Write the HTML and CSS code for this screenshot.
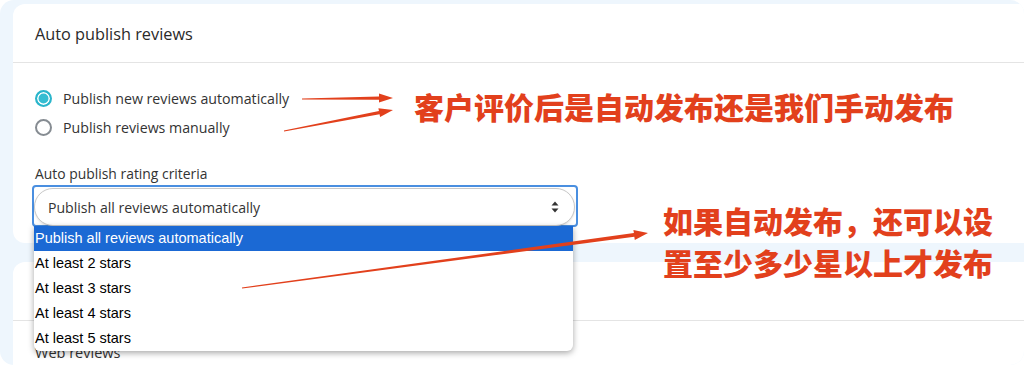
FILE: index.html
```html
<!DOCTYPE html>
<html lang="en">
<head>
<meta charset="utf-8">
<title>Auto publish reviews</title>
<link rel="stylesheet" href="styles.css">
</head>
<body>
<div class="frame">
  <section class="card card-top">
    <header class="card-head">Auto publish reviews</header>
    <div class="card-body">
      <div class="radios">
        <label class="radio-row"><span class="radio checked"></span><span>Publish new reviews automatically</span></label>
        <label class="radio-row"><span class="radio"></span><span>Publish reviews manually</span></label>
      </div>
      <div class="field-label">Auto publish rating criteria</div>
      <div class="select-focus">
        <div class="select">
          <span>Publish all reviews automatically</span>
          <svg class="updown" width="8" height="12" viewBox="0 0 8 12"><path d="M4 0.5 L7.5 4.5 H0.5 Z M4 11.5 L7.5 7.5 H0.5 Z" fill="#333"/></svg>
        </div>
      </div>
    </div>
  </section>
  <section class="card card-bottom">
    <header class="card-head card-head2"></header>
    <div class="card-body2">Web reviews</div>
  </section>

  <ul class="dropdown">
    <li class="opt selected">Publish all reviews automatically</li>
    <li class="opt">At least 2 stars</li>
    <li class="opt">At least 3 stars</li>
    <li class="opt">At least 4 stars</li>
    <li class="opt">At least 5 stars</li>
  </ul>

  <svg class="arrows" width="1024" height="365" viewBox="0 0 1024 365">
    <g fill="#e2401c">
      <polygon points="302,99.6 379,99.8 379,102.6 393,98 379,93.6 379,96.5 302,98.4"/>
      <polygon points="284.1,131.6 379.55,114.2 380.1,117.1 393,110 378.4,108.2 378.95,111.1 283.9,130.4"/>
      <polygon points="242.1,288.6 634.3,236.7 634.8,239.9 648,233 633.4,229.9 633.9,233.1 241.9,287.4"/>
    </g>
  </svg>

  <div class="note note1">客户评价后是自动发布还是我们手动发布</div>
  <div class="note note2">如果自动发布，还可以设<br>置至少多少星以上才发布</div>
</div>
</body>
</html>
```
FILE: styles.css
```css
* { box-sizing: border-box; }
html, body { margin: 0; padding: 0; background: #ffffff; }
body { width: 1024px; height: 365px; overflow: hidden; font-family: "Open Sans", "Noto Sans", sans-serif; color: #333; }

.frame {
  position: relative;
  width: 1024px;
  height: 365px;
  background: #eef6fd;
  border-radius: 14px;
  overflow: hidden;
  padding: 4px 0 0 13px;
  display: flex;
  flex-direction: column;
}

.card { background: #fff; }
.card-top { height: 239px; border-radius: 12px 0 0 12px; }
.card-bottom { margin-top: 19px; flex: 1; border-radius: 12px 0 0 0; }

.card-head {
  height: 59px;
  border-bottom: 1px solid #e4e4e4;
  padding-left: 22px;
  display: flex;
  align-items: center;
  font-size: 16.3px;
  color: #2a2a2a;
  padding-top: 1px;
}

.card-body { padding: 21px 0 0 19px; }

.radios { display: flex; flex-direction: column; }
.radio-row { display: flex; align-items: center; height: 29px; font-size: 14.2px; color: #333; gap: 11px; padding-left: 3px; }
.radio {
  width: 17px; height: 17px; border-radius: 50%;
  border: 2px solid #868c92; background: #fff; flex: none;
}
.radio.checked { border-color: #2ab5cb; background: #35bdd2; box-shadow: inset 0 0 0 1.5px #fff; }

.field-label { margin-top: 21px; padding-left: 3px; font-size: 13.9px; color: #333; height: 22px; line-height: 22px; }

.select-focus {
  width: 546px;
  height: 42px;
  border: 2px solid #4a8fe0;
  border-radius: 4px;
  padding: 1px 1px 0 0;
}
.select {
  height: 38px;
  border: 1px solid #c9c9c9;
  border-radius: 20px;
  background: #fff;
  box-shadow: 0 1px 2px rgba(0,0,0,0.12);
  display: flex;
  align-items: center;
  justify-content: space-between;
  padding: 0 15px 0 13px;
  font-size: 14.1px;
  color: #333;
}

.card-body2 { padding: 22px 0 0 22px; font-size: 14.5px; color: #333; }

.dropdown {
  position: absolute;
  left: 34px;
  top: 226px;
  width: 539px;
  margin: 0;
  padding: 0;
  list-style: none;
  background: #fff;
  border-radius: 0 0 6px 6px;
  box-shadow: 0 2px 6px rgba(0,0,0,0.35);
  font-family: "Liberation Sans", Arial, sans-serif;
  font-size: 14.5px;
  color: #000;
}
.opt { height: 25px; line-height: 25px; padding-left: 1px; }
.opt.selected { background: #1b69d4; color: #fff; }

.arrows { position: absolute; left: 0; top: 0; pointer-events: none; }

.note {
  position: absolute;
  font-family: "Noto Sans CJK SC", "Noto Sans", sans-serif;
  font-weight: 900;
  font-size: 30px;
  line-height: 42px;
  color: #e2401c;
  white-space: nowrap;
}
.note1 { left: 414px; top: 85px; }
.note2 { left: 663px; top: 199px; }
```
